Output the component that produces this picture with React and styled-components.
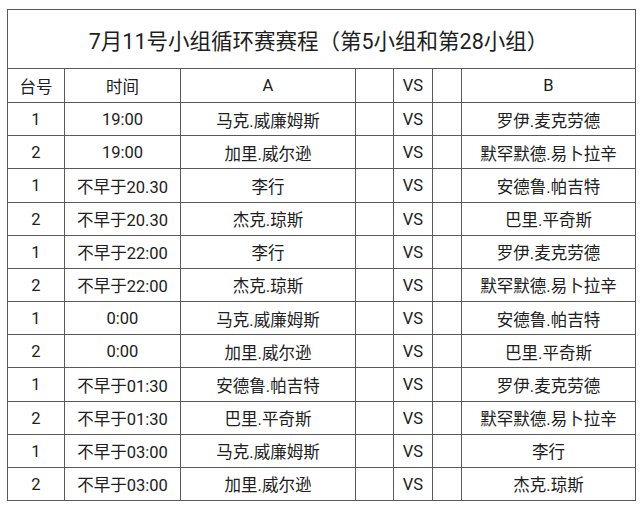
import React from 'react';
import styled, { createGlobalStyle } from 'styled-components';

const GlobalStyle = createGlobalStyle`
  html, body {
    margin: 0;
    padding: 0;
    background: #ffffff;
  }
  body {
    font-family: Roboto, "Noto Sans CJK SC", sans-serif;
    color: #222;
  }
`;

const Page = styled.div`
  width: 640px;
  height: 511px;
  padding: 9px 0 0 7px;
  box-sizing: border-box;
  background: #fff;
`;

const Sheet = styled.div`
  display: grid;
  grid-template-columns: 56px 115px 174px 37px 38px 28px 173px;
  grid-template-rows: 58px 33px repeat(12, 1fr);
  gap: 1px;
  padding: 1px;
  width: 629px;
  height: 492px;
  box-sizing: border-box;
  background: #5a5a5a;
`;

const Title = styled.div`
  grid-column: 1 / -1;
  background: #fff;
  display: flex;
  align-items: center;
  justify-content: center;
  padding-right: 6px;
  font-size: 21.5px;
  color: #1e1e1e;
`;

const Cell = styled.div`
  background: #fff;
  display: flex;
  align-items: center;
  justify-content: center;
  font-size: 16.5px;
  color: #202020;
  white-space: nowrap;
  padding-top: ${({ $head }) => ($head ? '0' : '1px')};
`;

const rows = [
  ['1', '19:00', '马克.威廉姆斯', '罗伊.麦克劳德'],
  ['2', '19:00', '加里.威尔逊', '默罕默德.易卜拉辛'],
  ['1', '不早于20.30', '李行', '安德鲁.帕吉特'],
  ['2', '不早于20.30', '杰克.琼斯', '巴里.平奇斯'],
  ['1', '不早于22:00', '李行', '罗伊.麦克劳德'],
  ['2', '不早于22:00', '杰克.琼斯', '默罕默德.易卜拉辛'],
  ['1', '0:00', '马克.威廉姆斯', '安德鲁.帕吉特'],
  ['2', '0:00', '加里.威尔逊', '巴里.平奇斯'],
  ['1', '不早于01:30', '安德鲁.帕吉特', '罗伊.麦克劳德'],
  ['2', '不早于01:30', '巴里.平奇斯', '默罕默德.易卜拉辛'],
  ['1', '不早于03:00', '马克.威廉姆斯', '李行'],
  ['2', '不早于03:00', '加里.威尔逊', '杰克.琼斯'],
];

const App = () => (
  <Page>
    <GlobalStyle />
    <Sheet>
      <Title>7月11号小组循环赛赛程（第5小组和第28小组）</Title>

      <Cell $head>台号</Cell>
      <Cell $head>时间</Cell>
      <Cell $head>A</Cell>
      <Cell $head />
      <Cell $head>VS</Cell>
      <Cell $head />
      <Cell $head>B</Cell>

      {rows.map((r, i) => (
        <React.Fragment key={i}>
          <Cell>{r[0]}</Cell>
          <Cell>{r[1]}</Cell>
          <Cell>{r[2]}</Cell>
          <Cell />
          <Cell>VS</Cell>
          <Cell />
          <Cell>{r[3]}</Cell>
        </React.Fragment>
      ))}
    </Sheet>
  </Page>
);

export default App;
